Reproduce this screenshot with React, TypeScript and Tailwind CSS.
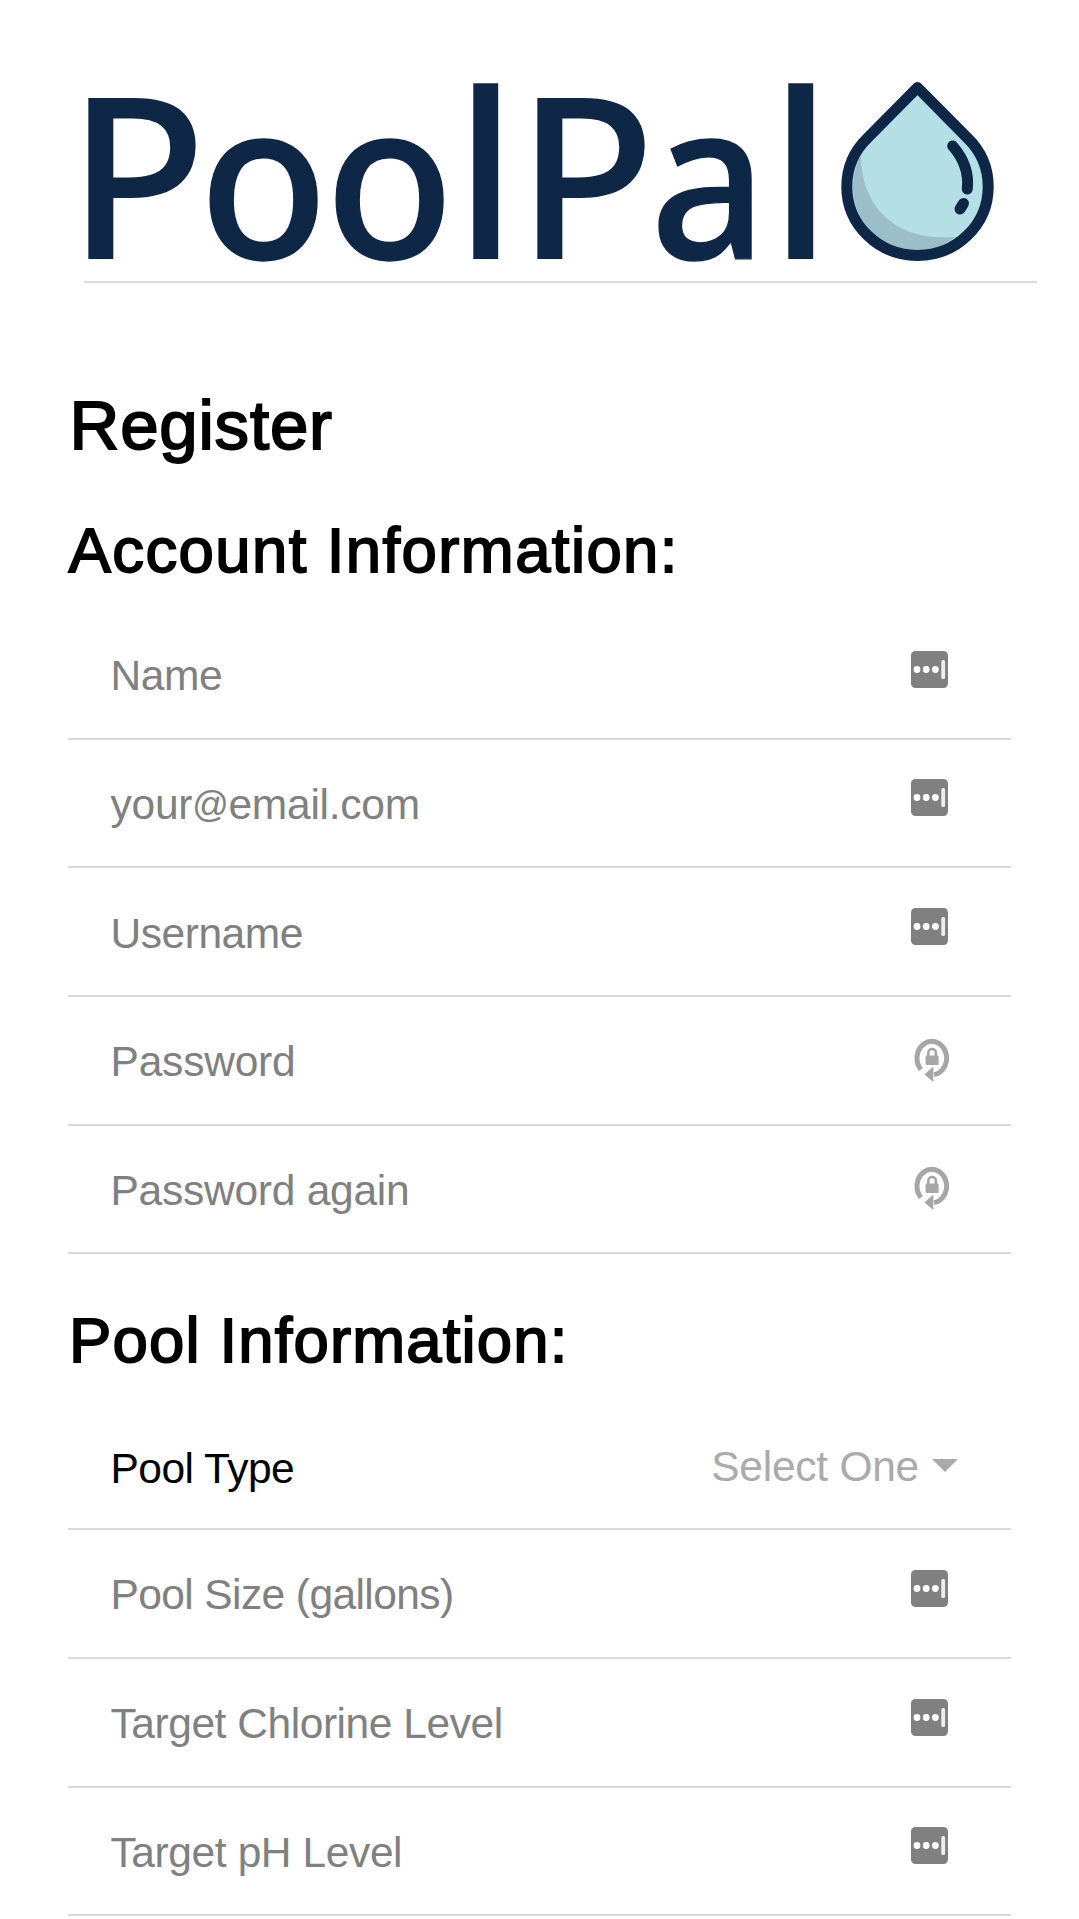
import type { ReactNode } from "react";

const letters = [
  { char: "P", className: "w-[131.1px] scale-x-[1.015] ml-[-1px] mr-[1px]" },
  { char: "o", className: "w-[126.9px] scale-x-[0.935] scale-y-[0.968] [-webkit-text-stroke:1.4px_#0f2747]" },
  { char: "o", className: "w-[128.9px] scale-x-[0.935] scale-y-[0.968] [-webkit-text-stroke:1.4px_#0f2747]" },
  { char: "l", className: "w-[62.4px] scale-x-[1.04] scale-y-[1.025]" },
  { char: "P", className: "w-[133.6px] scale-x-[1.015] ml-[-1px] mr-[1px]" },
  { char: "a", className: "w-[118.6px] scale-x-[0.905] scale-y-[0.968] [-webkit-text-stroke:1.4px_#0f2747]" },
  { char: "l", className: "w-[67px] scale-x-[1.04] scale-y-[1.025]" },
];

function Logo() {
  return (
    <div className="ml-[-16.5px] flex h-[211px] items-start">
      <div className="mt-[-12px] flex font-['Noto_Sans',sans-serif] text-[226px] leading-[226px] font-medium text-[#0f2747]">
        {letters.map(({ char, className }, i) => (
          <span key={i} className={`block origin-[0_201px] ${className}`}>
            {char}
          </span>
        ))}
      </div>
      <svg viewBox="836 70 163 205" className="h-[205px] w-[163px] shrink-0">
        <path d="M917.5 88L867.5 138A70.7 68.8 0 1 0 967.5 138Z" fill="#b4dfe7" />
        <path
          d="M861 156C861 203 892 242 955 237C943 247 931 250 917.5 250C882 250 853 222 853 187C853 175 856 164 861 156Z"
          fill="#9bbec8"
        />
        <g fill="none" stroke="#0f2747" strokeLinecap="round" strokeLinejoin="round" strokeWidth="11">
          <path d="M917.5 87.5L867.5 138A70.7 68.8 0 1 0 967.5 138Z" />
          <path d="M952.7 146C964 159 969 174 967.3 189" />
          <path d="M963.5 203.5L960 209" />
        </g>
      </svg>
    </div>
  );
}

function AutofillIcon() {
  return (
    <svg viewBox="0 0 37 37" className="mr-[63.5px] mb-[50px] size-[37px]">
      <rect width="37" height="37" rx="4.5" fill="#808080" />
      <g fill="#fff">
        <circle cx="6" cy="18.5" r="3.4" />
        <circle cx="15.2" cy="18.5" r="3.4" />
        <circle cx="24.4" cy="18.5" r="3.4" />
      </g>
      <rect x="30.3" y="9" width="3.8" height="19" rx="1.6" fill="#eee" />
    </svg>
  );
}

function GeneratePasswordIcon() {
  return (
    <svg viewBox="0 0 36 44" className="mr-[61px] mb-[42px] h-[44px] w-[36px]">
      <path d="M7 31.5A14.8 16.7 0 1 1 20 36.6" fill="none" stroke="#a6a6a6" strokeWidth="5" />
      <path d="M10.5 36.4L19.3 28.4V44Z" fill="#a6a6a6" />
      <rect x="11.6" y="17.5" width="13" height="9.5" rx="1" fill="#a6a6a6" />
      <path d="M14.3 18V14.8A3.8 3.8 0 0 1 21.9 14.8V18" fill="none" stroke="#a6a6a6" strokeWidth="2.6" />
    </svg>
  );
}

function Row({ label, icon }: { label: ReactNode; icon: ReactNode }) {
  return (
    <div className="flex h-[128.7px] items-end justify-between border-b-2 border-[#dadada] pl-[42.5px] text-[42.5px] leading-[50px] tracking-[-0.45px] text-[#808080]">
      <div className="mb-[36.5px] whitespace-nowrap">{label}</div>
      {icon}
    </div>
  );
}

export default function App() {
  return (
    <main className="h-[1919px] w-[1079px] overflow-hidden bg-white pt-[70px] font-['Liberation_Sans',sans-serif] text-black">
      <header className="ml-[84px] w-[953px] border-b-2 border-[#dadada]">
        <Logo />
      </header>
      <form className="mr-[68px] ml-[68px]">
        <h1 className="mt-[103px] h-[80px] pl-[1.5px] text-[69px] leading-[80px] tracking-[0.8px] [-webkit-text-stroke:1.9px_black]">
          Register
        </h1>
        <h2 className="mt-[48px] h-[72px] pl-[0.5px] text-[63.5px] leading-[72px] tracking-[1.4px] [-webkit-text-stroke:1.8px_black]">
          Account Information:
        </h2>
        <div className="mt-[25px]">
          <Row label="Name" icon={<AutofillIcon />} />
          <Row
            label={
              <span className="tracking-[-0.25px]">
                your<span className="relative top-[-2px] text-[36px] leading-none">@</span>email.com
              </span>
            }
            icon={<AutofillIcon />}
          />
          <Row label="Username" icon={<AutofillIcon />} />
          <Row label={<span className="tracking-[-0.2px]">Password</span>} icon={<GeneratePasswordIcon />} />
          <Row label={<span className="tracking-[-0.25px]">Password again</span>} icon={<GeneratePasswordIcon />} />
        </div>
        <h2 className="mt-[50px] h-[72px] pl-[1px] text-[63.5px] leading-[72px] tracking-[1.15px] [-webkit-text-stroke:1.8px_black]">
          Pool Information:
        </h2>
        <div className="mt-[25px]">
          <Row
            label={<span className="relative top-[2.5px] tracking-[-0.5px] text-black">Pool Type</span>}
            icon={
              <div className="mr-[53px] mb-[36px] flex items-center gap-[13px] tracking-[-0.25px] text-[#aaaaaa]">
                <span>Select One</span>
                <svg viewBox="0 0 26 13" className="mt-[-3px] h-[13px] w-[26px]">
                  <path d="M0 0H26L13 13Z" fill="#aaaaaa" />
                </svg>
              </div>
            }
          />
          <Row label={<span className="tracking-[-0.6px]">Pool Size (gallons)</span>} icon={<AutofillIcon />} />
          <Row label="Target Chlorine Level" icon={<AutofillIcon />} />
          <Row label={<span className="tracking-[-0.4px]">Target pH Level</span>} icon={<AutofillIcon />} />
        </div>
      </form>
    </main>
  );
}
